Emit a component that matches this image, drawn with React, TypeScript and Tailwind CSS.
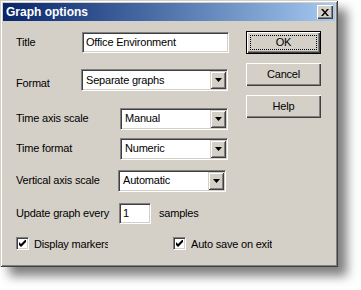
import React from 'react';

const font = { fontFamily: '"Liberation Sans", Arial, sans-serif' };

function Sunken({ className = '', children }: { className?: string; children?: React.ReactNode }) {
  return (
    <div
      className={`flex items-center bg-white border border-t-[#808080] border-l-[#808080] border-b-white border-r-white shadow-[inset_1px_1px_0_#404040,inset_-1px_-1px_0_#d4d0c8] ${className}`}
    >
      {children}
    </div>
  );
}

function Select({ value, className = '' }: { value: string; className?: string }) {
  return (
    <Sunken className={`h-[22px] p-[1px] ${className}`}>
      <span className="flex-1 pl-[3px] text-black">{value}</span>
      <div className="w-[16px] h-full flex items-center justify-center bg-[#d4d0c8] shadow-[inset_1px_1px_0_#d4d0c8,inset_-1px_-1px_0_#404040,inset_2px_2px_0_#ffffff,inset_-2px_-2px_0_#808080]">
        <svg width="7" height="4" viewBox="0 0 7 4">
          <path d="M0 0h7L3.5 4z" fill="#000" />
        </svg>
      </div>
    </Sunken>
  );
}

function Button({ label, isDefault = false }: { label: string; isDefault?: boolean }) {
  return (
    <div
      className={`relative w-[75px] h-[23px] flex items-center justify-center bg-[#d4d0c8] text-black ${
        isDefault
          ? 'border border-black shadow-[inset_1px_1px_0_#ffffff,inset_-1px_-1px_0_#404040,inset_-2px_-2px_0_#808080]'
          : 'shadow-[inset_1px_1px_0_#ffffff,inset_-1px_-1px_0_#404040,inset_-2px_-2px_0_#808080]'
      }`}
    >
      {isDefault && <div className="absolute inset-[3px] border border-dotted border-black" />}
      <span>{label}</span>
    </div>
  );
}

function Check({ label, labelClass = '' }: { label: string; labelClass?: string }) {
  return (
    <div className="flex items-center">
      <Sunken className="w-[13px] h-[13px] justify-center">
        <svg width="7" height="7" viewBox="0 0 7 7">
          <path d="M0 2v3l2 2 5-5V-1L2 4z" fill="#000" />
        </svg>
      </Sunken>
      <span className={`ml-[5px] whitespace-nowrap overflow-hidden ${labelClass}`}>{label}</span>
    </div>
  );
}

export default function App() {
  return (
    <div className="w-[361px] h-[290px] bg-white text-[11px] tracking-[-0.2px] text-black" style={font}>
      <div className="w-[338px] h-[267px] bg-[#d4d0c8] p-[3px] flex flex-col shadow-[inset_1px_1px_0_#d4d0c8,inset_-1px_-1px_0_#404040,inset_2px_2px_0_#ffffff,inset_-2px_-2px_0_#808080,9px_9px_10px_rgba(0,0,0,0.5)]">
        <div className="h-[18px] flex items-center justify-between pl-[3px] pr-[2px] bg-gradient-to-r from-[#0a246a] to-[#a6caf0]">
          <span className="text-white font-bold text-[12px] tracking-normal">Graph options</span>
          <div className="w-[16px] h-[14px] flex items-center justify-center bg-[#d4d0c8] shadow-[inset_1px_1px_0_#ffffff,inset_-1px_-1px_0_#404040,inset_-2px_-2px_0_#808080]">
            <svg width="8" height="7" viewBox="0 0 8 7">
              <path d="M0 0h2l2 2.5L6 0h2L5 3.5 8 7H6L4 4.5 2 7H0l3-3.5z" fill="#000" />
            </svg>
          </div>
        </div>

        <div className="flex flex-1">
          <div className="flex flex-col pl-[13px] w-[240px]">
            <div className="flex items-center mt-[11px]">
              <span className="w-[66px]">Title</span>
              <Sunken className="w-[147px] h-[21px]">
                <span className="pl-[3px]">Office Environment</span>
              </Sunken>
            </div>
            <div className="flex items-center mt-[16px]">
              <span className="w-[65px] mt-[6px]">Format</span>
              <Select value="Separate graphs" className="w-[147px]" />
            </div>
            <div className="flex items-center mt-[16px]">
              <span className="w-[104px]">Time axis scale</span>
              <Select value="Manual" className="w-[108px]" />
            </div>
            <div className="flex items-center mt-[8px]">
              <span className="w-[104px]">Time format</span>
              <Select value="Numeric" className="w-[108px]" />
            </div>
            <div className="flex items-center mt-[10px]">
              <span className="w-[102px]">Vertical axis scale</span>
              <Select value="Automatic" className="w-[108px]" />
            </div>
            <div className="flex items-center mt-[11px]">
              <span className="w-[103px]">Update graph every</span>
              <Sunken className="w-[32px] h-[21px]">
                <span className="pl-[3px]">1</span>
              </Sunken>
              <span className="ml-[8px]">samples</span>
            </div>
            <div className="flex items-center mt-[12px]">
              <Check label="Display markers" labelClass="w-[74px]" />
              <div className="ml-[65px]">
                <Check label="Auto save on exit" />
              </div>
            </div>
          </div>
          <div className="flex flex-col gap-[9px] pl-[3px] pt-[10px]">
            <Button label="OK" isDefault />
            <Button label="Cancel" />
            <Button label="Help" />
          </div>
        </div>
      </div>
    </div>
  );
}
